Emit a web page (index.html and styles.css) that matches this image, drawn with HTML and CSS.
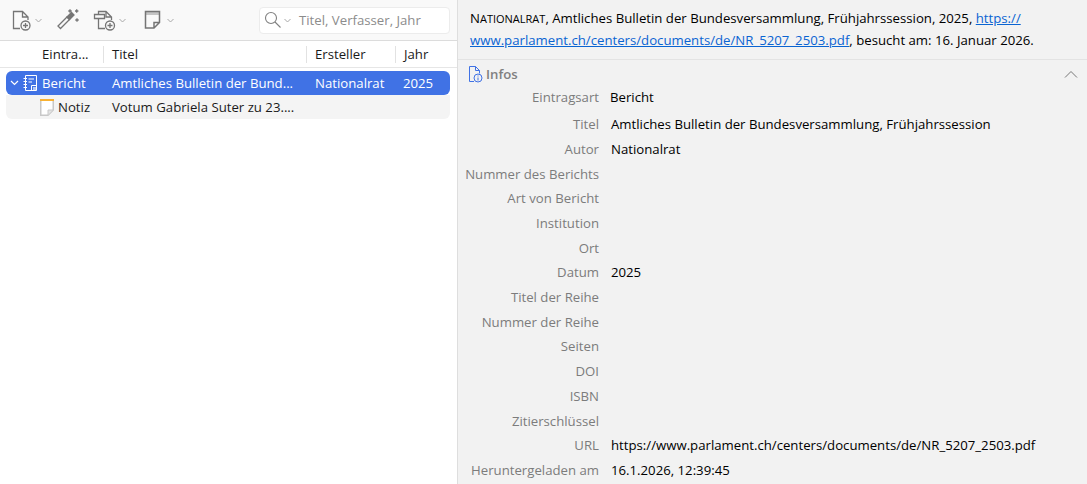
FILE: index.html
```html
<!DOCTYPE html>
<html lang="de">
<head>
    <meta charset="UTF-8">
    <title>Infos</title>
    <link rel="stylesheet" href="styles.css">
</head>
<body>
    <div class="app">
        <div class="left-pane">
            <div class="toolbar">
                <div class="tool-btn new-item">
                    <svg class="tool-icon" width="22" height="22" viewBox="0 0 22 22"><path d="M8 19.500H1.500V2.500H10.500L16 8V11M10.500 2.500V8H16"/><circle cx="13.500" cy="16.500" r="4.500"/><path d="M13.500 14v5M11 16.500h5"/></svg>
                    <svg class="chevron" width="7" height="5" viewBox="0 0 7 5"><path d="M.5 1l3 3 3-3"/></svg>
                </div>
                <div class="tool-btn wand">
                    <svg class="tool-icon" width="24" height="24" viewBox="0 0 24 24"><path d="M2 18l2.500 2.500 9-9L11 9z"/><path class="solid" d="M11 9l2.500 2.500L18 7l-2.500-2.500z"/><path d="M14 1.300v3.400M12.300 3h3.400M20.700 1.300v3.400M19 3h3.400M21 10.300v3.400M19.300 12h3.400"/></svg>
                </div>
                <div class="tool-btn attach">
                    <svg class="tool-icon" width="24" height="22" viewBox="0 0 24 22"><path d="M6.500 5V2.500H14L19.500 8V11M14 2.500V8H19.500M6.500 9.500V19.500H13"/><path d="M2.500 5.500H12.500V9.500H2.500z"/><circle cx="18" cy="16.500" r="4.500"/><path d="M18 14v5M15.500 16.500h5"/></svg>
                    <svg class="chevron" width="7" height="5" viewBox="0 0 7 5"><path d="M.5 1l3 3 3-3"/></svg>
                </div>
                <div class="tool-btn note">
                    <svg class="tool-icon" width="18" height="20" viewBox="0 0 18 20"><path class="band" d="M1.500 1.500H15.500V5H1.500z"/><path d="M1.500 1.500H15.500V12.500L10 18H1.500zM10 18V12.500H15.500"/></svg>
                    <svg class="chevron" width="7" height="5" viewBox="0 0 7 5"><path d="M.5 1l3 3 3-3"/></svg>
                </div>
                <div class="search-box">
                    <svg class="search-icon" width="18" height="18" viewBox="0 0 18 18"><circle cx="7" cy="7" r="5.500"/><path d="M11 11l5.500 5.500"/></svg>
                    <svg class="chevron" width="7" height="5" viewBox="0 0 7 5"><path d="M.5 1l3 3 3-3"/></svg>
                    <span class="search-text">Titel, Verfasser, Jahr</span>
                </div>
            </div>
            <div class="col-header">
                <div class="col col-type">Eintra...</div>
                <div class="col col-title">Titel</div>
                <div class="col col-creator">Ersteller</div>
                <div class="col col-year">Jahr</div>
            </div>
            <div class="items">
                <div class="row row-selected">
                    <div class="cell col-type">
                        <svg class="twisty" width="9" height="6" viewBox="0 0 9 6"><path d="M1 1l3.500 3.500L8 1"/></svg>
                        <svg class="item-icon report-icon" width="15" height="16" viewBox="0 0 15 16"><path d="M2.500 .5H13.500V15.500H2.500zM.5 3.500H4M.5 6.500H4M.5 9.500H4M.5 12.500H4M5.500 4H11M5.500 7H9M8.500 15V10.500H13"/><path class="fold" d="M10 12h3v3h-3z"/></svg>
                        <span>Bericht</span>
                    </div>
                    <div class="cell col-title">Amtliches Bulletin der Bund...</div>
                    <div class="cell col-creator">Nationalrat</div>
                    <div class="cell col-year">2025</div>
                </div>
                <div class="row row-child">
                    <div class="cell col-type child-type">
                        <svg class="item-icon" width="14" height="17" viewBox="0 0 14 17"><path d="M.75 1H13.250V11L8 16.250H.75z" fill="#fff" stroke="#c8c8c8" stroke-width="1.500"/><path d="M8 16V11H13" fill="#e4e4e4" stroke="#c8c8c8"/><path d="M0 0h14v2H0z" fill="#f9b233"/></svg>
                        <span>Notiz</span>
                    </div>
                    <div class="cell col-title">Votum Gabriela Suter zu 23....</div>
                </div>
            </div>
        </div>
        <div class="right-pane">
            <div class="citation">
                <span class="smallcaps">Nationalrat</span>, Amtliches Bulletin der Bundesversammlung, Frühjahrssession, 2025, <a class="link" href="#">https://<br>www.parlament.ch/centers/documents/de/NR_5207_2503.pdf</a>, besucht am: 16. Januar 2026.
            </div>
            <div class="section-head">
                <svg class="info-icon" width="15" height="17" viewBox="0 0 15 17"><path d="M6 15.500H1.500V.5H7.500L11.500 4.500V7.500M7.500.5V4.500H11.500"/><circle cx="10" cy="12" r="4"/><path d="M10 11.500v3M10 9.500v1"/></svg>
                <span class="section-title">Infos</span>
                <svg class="collapse" width="14" height="9" viewBox="0 0 14 9"><path d="M1 7.500l6-6 6 6"/></svg>
            </div>
            <div class="fields">
                <div class="field field-first"><div class="label">Eintragsart</div><div class="value value-type">Bericht</div></div>
                <div class="field field-second"><div class="label">Titel</div><div class="value">Amtliches Bulletin der Bundesversammlung, Frühjahrssession</div></div>
                <div class="field"><div class="label">Autor</div><div class="value">Nationalrat</div></div>
                <div class="field"><div class="label">Nummer des Berichts</div><div class="value"></div></div>
                <div class="field"><div class="label">Art von Bericht</div><div class="value"></div></div>
                <div class="field"><div class="label">Institution</div><div class="value"></div></div>
                <div class="field"><div class="label">Ort</div><div class="value"></div></div>
                <div class="field"><div class="label">Datum</div><div class="value">2025</div></div>
                <div class="field"><div class="label">Titel der Reihe</div><div class="value"></div></div>
                <div class="field"><div class="label">Nummer der Reihe</div><div class="value"></div></div>
                <div class="field"><div class="label">Seiten</div><div class="value"></div></div>
                <div class="field"><div class="label">DOI</div><div class="value"></div></div>
                <div class="field"><div class="label">ISBN</div><div class="value"></div></div>
                <div class="field"><div class="label">Zitierschlüssel</div><div class="value"></div></div>
                <div class="field"><div class="label">URL</div><div class="value">https://www.parlament.ch/centers/documents/de/NR_5207_2503.pdf</div></div>
                <div class="field"><div class="label">Heruntergeladen am</div><div class="value">16.1.2026, 12:39:45</div></div>
            </div>
        </div>
    </div>
</body>
</html>
```

FILE: styles.css
```css
html, body {
    margin: 0;
    height: 100%;
    overflow: hidden;
}
body {
    font-family: "Open Sans", "Noto Sans", sans-serif;
    font-size: 13.2px;
    color: #1a1a1a;
    background-color: #fff;
}
.app {
    display: flex;
    height: 484px;
}

/* left side */
.left-pane {
    width: 457px;
    flex-shrink: 0;
    border-right: 1px solid #dedede;
    background-color: #fff;
}
.toolbar {
    display: flex;
    align-items: center;
    height: 41px;
    padding-left: 12px;
    box-sizing: border-box;
    background-color: #f9f9f9;
    border-bottom: 1px solid #dcdcdc;
}
.tool-btn {
    display: flex;
    align-items: center;
    gap: 3px;
    margin-right: 12px;
}
.new-item {
    gap: 1px;
    margin-right: 14px;
}
.attach {
    margin-right: 18px;
}
.note {
    gap: 5px;
}
.tool-icon {
    fill: none;
    stroke: #757575;
    stroke-width: 1.3;
}
.tool-icon .solid {
    fill: #757575;
}
.tool-icon .band {
    fill: #c4c4c4;
    stroke: none;
}
.note .tool-icon {
    stroke-width: 1.5;
}
.chevron {
    fill: none;
    stroke: #a8a8a8;
}
.search-box {
    display: flex;
    align-items: center;
    width: 191px;
    height: 27px;
    margin-left: auto;
    margin-right: 7px;
    padding-left: 4px;
    box-sizing: border-box;
    background-color: #fff;
    border: 1px solid #ececec;
    border-radius: 4px;
}
.search-icon {
    fill: none;
    stroke: #808080;
    stroke-width: 1.1;
    margin-right: 2px;
}
.search-text {
    margin-left: 8px;
    color: #8c8c8c;
}
.col-header {
    display: flex;
    align-items: center;
    height: 26px;
    border-bottom: 1px solid #e6e6e6;
}
.col {
    line-height: 17px;
    border-left: 1px solid #e2e2e2;
}
.col-type {
    width: 103px;
    padding-left: 42px;
    box-sizing: border-box;
}
.col.col-type {
    border-left: none;
}
.col-title {
    width: 203px;
    padding-left: 8px;
    box-sizing: border-box;
}
.col-creator {
    width: 89px;
    padding-left: 8px;
    box-sizing: border-box;
}
.col-year {
    padding-left: 8px;
}
.items {
    padding: 3px 7px 0 6px;
}
.row {
    display: flex;
    align-items: center;
    height: 24px;
    white-space: nowrap;
}
.row .col-type {
    width: 97px;
    padding-left: 0;
}
.row .cell {
    display: flex;
    align-items: center;
}
.row .col-title {
    padding-left: 9px;
}
.row .col-creator {
    padding-left: 9px;
}
.row-selected {
    color: #fff;
    background-color: #4072e5;
    border-radius: 6px;
}
.twisty {
    margin-left: 4px;
    margin-right: 4px;
    fill: none;
    stroke: #fff;
    stroke-width: 1.2;
}
.row-selected .item-icon {
    margin-right: 4px;
}
.report-icon {
    fill: none;
    stroke: #fff;
}
.report-icon .fold {
    fill: #fff;
    stroke: none;
    opacity: 0.6;
}
.row-child {
    background-color: #f4f4f4;
    border-radius: 0 0 6px 6px;
}
.child-type {
    padding-left: 34px !important;
}
.child-type .item-icon {
    margin-right: 4px;
}

/* right side */
.right-pane {
    flex: 1;
    background-color: #f2f2f2;
}
.citation {
    height: 60px;
    padding: 8px 12px 0;
    box-sizing: border-box;
    line-height: 21.500px;
    color: #000;
    border-bottom: 1px solid #e3e3e3;
    white-space: nowrap;
}
.smallcaps {
    display: inline-block;
    font-size: 11px;
    text-transform: uppercase;
}
.smallcaps::first-letter {
    font-size: 13.2px;
}
.link {
    color: #0a64d2;
}
.section-head {
    display: flex;
    align-items: center;
    height: 25px;
    padding: 3px 9px 0 10px;
    box-sizing: border-box;
}
.info-icon {
    fill: none;
    stroke: #4072e5;
    margin-right: 3px;
}
.section-title {
    font-weight: 600;
    color: #808080;
}
.collapse {
    margin-left: auto;
    fill: none;
    stroke: #777;
}
.field {
    display: flex;
    align-items: center;
    height: 24.690px;
}
.field-first {
    height: 25px;
    padding-bottom: 1px;
    box-sizing: border-box;
}
.field-second {
    height: 26.650px;
    padding-top: 1.500px;
    box-sizing: border-box;
}
.label {
    width: 141px;
    text-align: right;
    color: #7c7c7c;
    white-space: nowrap;
}
.value {
    padding-left: 12px;
    color: #000;
    white-space: nowrap;
}
.value-type {
    padding-left: 11px;
}
```
